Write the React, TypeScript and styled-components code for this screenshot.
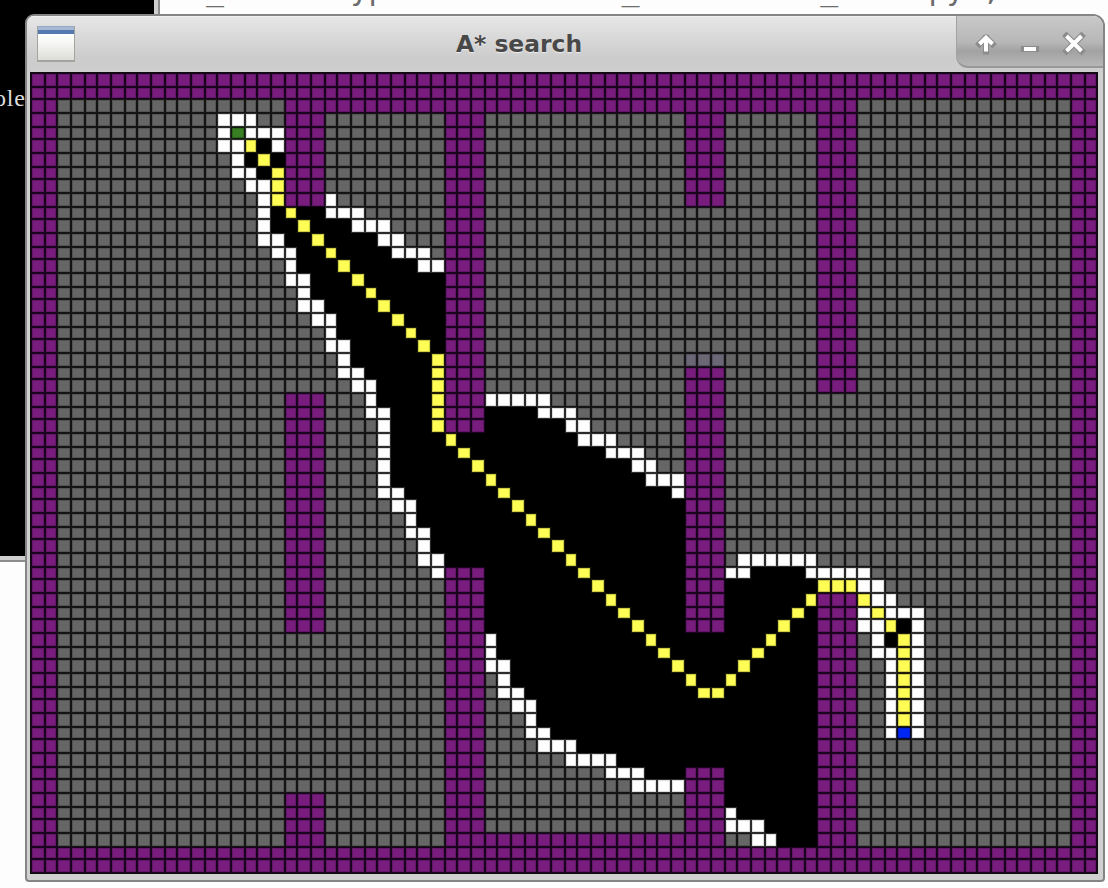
import React from "react";
import styled, { createGlobalStyle } from "styled-components";

const GlobalStyle = createGlobalStyle`
  *, *::before, *::after { box-sizing: border-box; }
  body { margin: 0; background: #fdfdfd; }
`;

type Kind = "wall" | "open" | "seen" | "edge" | "path" | "start" | "goal" | "tint";

const COLS = 80;
const ROWS = 60;

// Wall rectangles: [first column, last column, first row, last row]
const WALLS: number[][] = [
  [0, 79, 0, 1],
  [0, 79, 58, 59],
  [0, 1, 0, 59],
  [78, 79, 0, 59],
  [19, 61, 2, 2],
  [31, 51, 57, 57],
  [19, 21, 3, 9],
  [19, 21, 24, 41],
  [19, 21, 54, 57],
  [31, 33, 3, 26],
  [31, 33, 37, 57],
  [49, 51, 3, 9],
  [49, 51, 22, 41],
  [49, 51, 52, 57],
  [59, 61, 3, 23],
  [59, 61, 39, 57],
];

// Search state per row, as "column:runs"; W frontier, K visited, Y path
const SEARCH: Record<number, string> = {
  3: "14:W3",
  4: "14:WGW3",
  5: "14:W2YKW",
  6: "15:WKYK",
  7: "15:W2KY",
  8: "16:W2Y",
  9: "17:WY 22:W",
  10: "17:WKYK2W3",
  11: "17:WK2YK3W3",
  12: "17:W2K2YK4W2",
  13: "18:W2K2YK4W3",
  14: "19:WK3YK5W2",
  15: "19:W2K3YK6",
  16: "20:WK4YK5",
  17: "20:W2K4YK4",
  18: "21:W2K4YK3",
  19: "22:WK5YK2",
  20: "22:W2K5YK",
  21: "23:WK6Y 49:T3",
  22: "23:W2K5Y",
  23: "24:W2K4Y",
  24: "25:WK4Y 34:W5",
  25: "25:W2K3Y 34:K4W3",
  26: "26:WK3Y 34:K6W2",
  27: "26:WK4YK9W3",
  28: "26:WK5YK10W3",
  29: "26:WK6YK11W2",
  30: "26:WK7YK11W3",
  31: "26:W2K7YK12W",
  32: "27:W2K7YK12",
  33: "28:WK8YK11",
  34: "28:W2K8YK10",
  35: "29:WK9YK9",
  36: "29:W2K9YK8 53:W6",
  37: "30:W 34:K7YK7 52:W2K4W5",
  38: "34:K8YK6 52:K7Y3W2",
  39: "34:K9YK5 52:K6Y 62:YW2",
  40: "34:K10YK4 52:K5YK 62:WYW3",
  41: "34:K11YK3 52:K4YK2 62:W2YKW",
  42: "34:WK11YK8YK3 63:WKYW",
  43: "34:WK12YK6YK4 63:W2YW",
  44: "34:W2K12YK4YK5 64:WYW",
  45: "35:WK13YK2YK6 64:WYW",
  46: "35:W2K13Y2K7 64:WYW",
  47: "36:W2K21 64:WYW",
  48: "37:WK21 64:WYW",
  49: "37:W2K20 64:WBW",
  50: "38:W3K18",
  51: "40:W4K15",
  52: "43:W3K3 52:K7",
  53: "45:W4 52:K7",
  54: "52:K7",
  55: "52:WK6",
  56: "52:W3K4",
  57: "54:W2K3",
};

const LETTERS: Record<string, Kind> = {
  W: "edge",
  K: "seen",
  Y: "path",
  G: "start",
  B: "goal",
  T: "tint",
};

function buildMap(): Kind[] {
  const map: Kind[] = new Array(COLS * ROWS).fill("open");
  for (const [c0, c1, r0, r1] of WALLS) {
    for (let r = r0; r <= r1; r++) {
      for (let c = c0; c <= c1; c++) map[r * COLS + c] = "wall";
    }
  }
  for (const [row, spec] of Object.entries(SEARCH)) {
    for (const part of spec.split(" ")) {
      const [first, runs] = part.split(":");
      let c = Number(first);
      for (const m of runs.matchAll(/([A-Z])(\d*)/g)) {
        const n = m[2] ? Number(m[2]) : 1;
        for (let i = 0; i < n; i++) map[Number(row) * COLS + c++] = LETTERS[m[1]];
      }
    }
  }
  return map;
}

const MAP = buildMap();

// fill, soft rim, gap line
const PAINT: Record<Kind, [string, string, string]> = {
  wall: ["#781c7d", "#611765", "#1a031e"],
  open: ["#666666", "#535353", "#141414"],
  tint: ["#6c6775", "#555060", "#151518"],
  seen: ["#000000", "#000000", "#000000"],
  edge: ["#ffffff", "#dcdcdc", "#2c2c2c"],
  path: ["#fffd54", "#ccca44", "#1c1b06"],
  start: ["#377f22", "#2c651b", "#0c1c08"],
  goal: ["#0026f5", "#001fc8", "#000838"],
};

const Desktop = styled.div`
  position: relative;
  width: 1108px;
  height: 888px;
  overflow: hidden;
  background: #fdfdfd;
`;

const Terminal = styled.div`
  position: absolute;
  left: 0;
  top: 0;
  width: 160px;
  height: 562px;
  padding: 84px 0 0;
  background: #000;
  border-right: 2px solid #8c8c8c;
  border-bottom: 2px solid #8c8c8c;
  box-shadow: inset -4px -4px 0 #cfcfcf;
`;

const TerminalText = styled.div`
  margin-left: -6px;
  font: 24px/28px "Liberation Serif", serif;
  letter-spacing: 0.8px;
  color: #dcdcdc;
`;

const Editor = styled.pre`
  position: absolute;
  left: 188px;
  top: -26px;
  margin: 0;
  font: 30px/32px "DejaVu Sans Mono", monospace;
  color: #6c6c6c;
`;

const Window = styled.section`
  position: absolute;
  left: 25px;
  top: 14px;
  width: 1080px;
  height: 868px;
  display: flex;
  flex-direction: column;
  border: 2px solid #858585;
  border-radius: 9px 12px 4px 4px;
  background: #d0d0d0;
  overflow: hidden;
`;

const TitleBar = styled.header`
  display: flex;
  align-items: flex-start;
  flex: 0 0 56px;
  background: linear-gradient(#e7e7e7, #d8d8d8 40%, #cccccc 75%, #cecece);
  box-shadow: inset 0 1px 0 #efefef;
`;

const AppIcon = styled.div`
  width: 38px;
  height: 36px;
  margin: 10px 0 0 10px;
  border: 1px solid #a3a3a0;
  border-bottom-width: 2px;
  border-top-color: #94a9c6;
  background: linear-gradient(#a7b8d2 0 3px, #5478b0 3px 7px, #ffffff 7px, #f6f6f5 16px, #dcdcd8);
`;

const Title = styled.h1`
  flex: 1;
  margin: 0;
  padding: 13px 0 0 7px;
  text-align: center;
  font: bold 23.4px/30px "DejaVu Sans", sans-serif;
  color: #484848;
  text-shadow: 0 1px 1px #eeeeee;
`;

const Controls = styled.div`
  display: flex;
  align-items: center;
  justify-content: space-between;
  width: 147px;
  height: 52px;
  padding: 4px 15px 0 15px;
  border-left: 1px solid #a2a2a2;
  border-bottom: 2px solid #989898;
  border-bottom-left-radius: 12px;
  background: linear-gradient(#c9c9c9, #b7b7b7 52%, #a2a2a2 70%, #b6b6b6);
`;

const ControlButton = styled.button`
  display: flex;
  width: 28px;
  height: 28px;
  padding: 0;
  border: 0;
  background: none;
`;

const Canvas = styled.main`
  width: 1068px;
  height: 802px;
  margin-left: 3px;
  padding: 1px;
  background: #0c0c0c;
`;

const Board = styled.div`
  display: grid;
  grid-template-columns: repeat(26, 14px 12px 14px) 14px 12px;
  grid-template-rows: repeat(20, 14px 12px 14px);
`;

const Cell = styled.div<{ $kind: Kind }>`
  border: 1px solid ${(p) => PAINT[p.$kind][2]};
  background: ${(p) => PAINT[p.$kind][0]};
  box-shadow: inset 0 0 0 1px ${(p) => PAINT[p.$kind][1]};
`;

function ControlIcon({ d }: { d: string }) {
  return (
    <svg width="28" height="28" viewBox="0 0 28 28" fill="none">
      <path d={d} stroke="#8c8c8c" strokeWidth="6.2" strokeLinejoin="round" strokeLinecap="square" />
      <path d={d} stroke="#ffffff" strokeWidth="4" />
    </svg>
  );
}

export default function App() {
  return (
    <Desktop>
      <GlobalStyle />
      <Editor>{"e_test  type from search_and search_test.py',"}</Editor>
      <Terminal>
        <TerminalText>ole</TerminalText>
      </Terminal>
      <Window>
        <TitleBar>
          <AppIcon />
          <Title>A* search</Title>
          <Controls>
            <ControlButton aria-label="Shade">
              <ControlIcon d="M14 22.5V9M7.5 15L14 8.5L20.5 15" />
            </ControlButton>
            <ControlButton aria-label="Minimize">
              <ControlIcon d="M8 20H20" />
            </ControlButton>
            <ControlButton aria-label="Close">
              <ControlIcon d="M6.5 7L21.5 22M21.5 7L6.5 22" />
            </ControlButton>
          </Controls>
        </TitleBar>
        <Canvas>
          <Board>
            {MAP.map((kind, i) => (
              <Cell key={i} $kind={kind} />
            ))}
          </Board>
        </Canvas>
      </Window>
    </Desktop>
  );
}
